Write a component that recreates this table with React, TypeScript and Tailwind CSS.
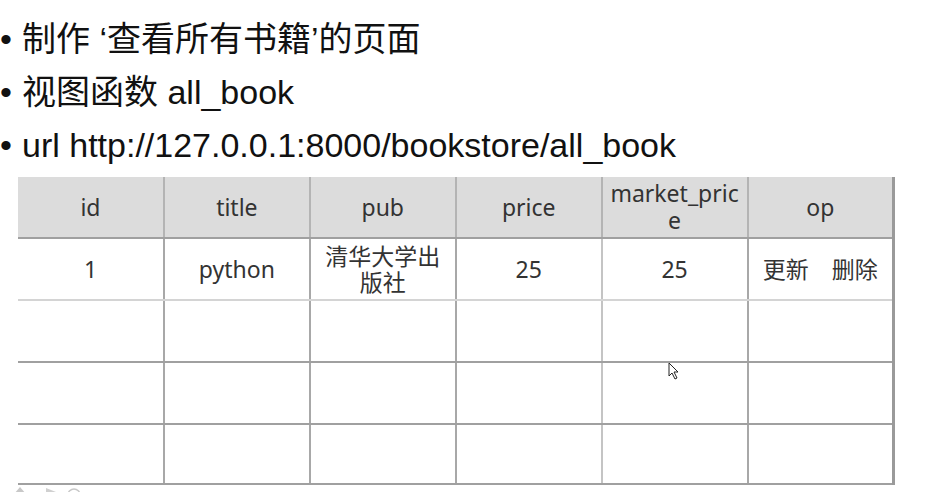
import React from "react";

const headers = ["id", "title", "pub", "price", "market_price", "op"];

const rows: string[][] = [
    ["1", "python", "清华大学出版社", "25", "25", "更新\u3000删除"],
    ["", "", "", "", "", ""],
    ["", "", "", "", "", ""],
    ["", "", "", "", "", ""],
];

const bullets = [
    "制作 ‘查看所有书籍’的页面",
    "视图函数 all_book",
    "url http://127.0.0.1:8000/bookstore/all_book",
];

const App: React.FC = () => {
    return (
        <div className="w-[928px] h-[492px] bg-white overflow-hidden relative">
            <ul className="pt-[13px] font-['Liberation_Sans','Noto_Sans_CJK_SC',sans-serif] text-[34px] leading-[53px] text-[#111]">
                {bullets.map((b, i) => (
                    <li key={i} className="flex">
                        <span className="w-[22px] shrink-0">•</span>
                        <span>{b}</span>
                    </li>
                ))}
            </ul>

            <table className="ml-[18px] mt-[5px] w-[877px] table-fixed border-collapse font-['Noto_Sans','Noto_Sans_CJK_SC',sans-serif] text-[23px] text-[#333] border-r-[3px] border-r-[#9a9a9a]">
                <thead>
                    <tr className="bg-[#dcdcdc] h-[61px]">
                        {headers.map((h, i) => (
                            <th
                                key={i}
                                className={`font-normal leading-[27px] px-[6px] break-all border-b-2 border-b-[#a0a0a0] ${i > 0 ? "border-l-2 border-l-[#b4b4b4]" : ""}`}
                            >
                                {h}
                            </th>
                        ))}
                    </tr>
                </thead>
                <tbody>
                    {rows.map((r, ri) => (
                        <tr key={ri} className={ri === 3 ? "h-[60px]" : "h-[62px]"}>
                            {r.map((c, ci) => (
                                <td
                                    key={ci}
                                    className={`text-center leading-[26px] px-1 ${ri === 0 ? "border-b-2 border-b-[#d4d4d4]" : "border-b-2 border-b-[#a0a0a0]"} ${ci > 0 ? (ci === 4 ? "border-l-2 border-l-[#c4c4c4]" : "border-l-2 border-l-[#a8a8a8]") : ""}`}
                                >
                                    {c}
                                </td>
                            ))}
                        </tr>
                    ))}
                </tbody>
            </table>

            {/* mouse cursor */}
            <svg className="absolute left-[668px] top-[362px]" width="12" height="18" viewBox="0 0 12 18">
                <path d="M1 1 L1 14 L4 11 L7 17 L9 16 L6 10 L10 10 Z" fill="white" stroke="#222" strokeWidth="1" />
            </svg>

            {/* player controls peeking at the bottom */}
            <svg className="absolute left-[10px] top-[486px]" width="72" height="8" viewBox="0 0 72 8">
                <path d="M4 8 L10 1 L16 8 Z" fill="#c8c8c8" />
                <path d="M36 2 L46 6 L36 8 Z" fill="#d0d0d0" />
                <circle cx="64" cy="9" r="6" fill="none" stroke="#c8c8c8" strokeWidth="1.5" />
            </svg>
        </div>
    );
};

export default App;
